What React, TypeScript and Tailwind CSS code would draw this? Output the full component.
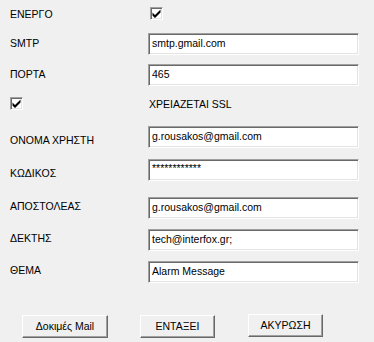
const font = "font-['Liberation_Sans',Arial,sans-serif]";

function Check() {
  return (
    <div className="flex h-[13px] w-[13px] items-center justify-center border border-t-[#a0a0a0] border-l-[#a0a0a0] border-b-white border-r-white bg-white shadow-[inset_1px_1px_0_#696969,inset_-1px_-1px_0_#e3e3e3]">
      <svg width="9" height="9" viewBox="0 0 9 9">
        <path d="M0.5 3.5 L3 6 L8.5 0.5 L8.5 3.5 L3 9 L0.5 6.5 Z" fill="#000" />
      </svg>
    </div>
  );
}

function Field({ value, password }: { value: string; password?: boolean }) {
  return (
    <div
      className={`flex h-[22px] w-[211px] border border-t-[#a0a0a0] border-l-[#a0a0a0] border-b-white border-r-white bg-white px-[2px] text-[10.5px] text-black shadow-[inset_1px_1px_0_#696969,inset_-1px_-1px_0_#e3e3e3] ${
        password ? "items-start pt-[3px] leading-none" : "items-center"
      }`}
    >
      <span className="pl-px">{value}</span>
    </div>
  );
}

function Row({
  top,
  label,
  labelOffset,
  value,
  password,
}: {
  top: string;
  label: string;
  labelOffset: string;
  value: string;
  password?: boolean;
}) {
  return (
    <div className={`flex items-start ${top}`}>
      <span className={`w-[138px] text-[10.5px] leading-[13px] ${labelOffset}`}>{label}</span>
      <Field value={value} password={password} />
    </div>
  );
}

function Btn({ label, w, extra }: { label: string; w: string; extra?: string }) {
  return (
    <button
      type="button"
      className={`flex h-[23px] ${w} items-center justify-center border border-t-white border-l-white border-b-[#696969] border-r-[#696969] bg-[#f0f0f0] text-[10.5px] text-black shadow-[inset_-1px_-1px_0_#a0a0a0] ${extra ?? ""}`}
    >
      {label}
    </button>
  );
}

export default function App() {
  return (
    <div className={`h-[342px] w-[374px] overflow-hidden bg-[#f0f0f0] pl-[10px] text-[#000] ${font}`}>
      <div className="flex items-start pt-[7px]">
        <span className="w-[140px] pt-px text-[10.5px] leading-[13px]">ΕΝΕΡΓΟ</span>
        <Check />
      </div>
      <Row top="mt-[12px]" label="SMTP" labelOffset="pt-[4px]" value="smtp.gmail.com" />
      <Row top="mt-[9px]" label="ΠΟΡΤΑ" labelOffset="pt-[4px]" value="465" />
      <div className="mt-[11px] flex items-start">
        <div className="w-[139px]">
          <Check />
        </div>
        <span className="pt-[1px] text-[10.5px] leading-[13px]">ΧΡΕΙΑΖΕΤΑΙ SSL</span>
      </div>
      <Row top="mt-[15px]" label="ΟΝΟΜΑ ΧΡΗΣΤΗ" labelOffset="pt-[8px]" value="g.rousakos@gmail.com" />
      <Row top="mt-[11px]" label="ΚΩΔΙΚΟΣ" labelOffset="pt-[8px]" value="************" password />
      <Row top="mt-[16px]" label="ΑΠΟΣΤΟΛΕΑΣ" labelOffset="pt-[3px]" value="g.rousakos@gmail.com" />
      <Row top="mt-[10px]" label="ΔΕΚΤΗΣ" labelOffset="pt-[3px]" value="tech@interfox.gr;" />
      <Row top="mt-[10px]" label="ΘΕΜΑ" labelOffset="pt-[3px]" value="Alarm Message" />
      <div className="ml-[12px] mt-[32px] flex items-start">
        <Btn label="Δοκιμές Mail" w="w-[86px]" />
        <Btn label="ΕΝΤΑΞΕΙ" w="w-[75px]" extra="ml-[32px]" />
        <Btn label="ΑΚΥΡΩΣΗ" w="w-[75px]" extra="ml-[33px] -mt-px" />
      </div>
    </div>
  );
}
